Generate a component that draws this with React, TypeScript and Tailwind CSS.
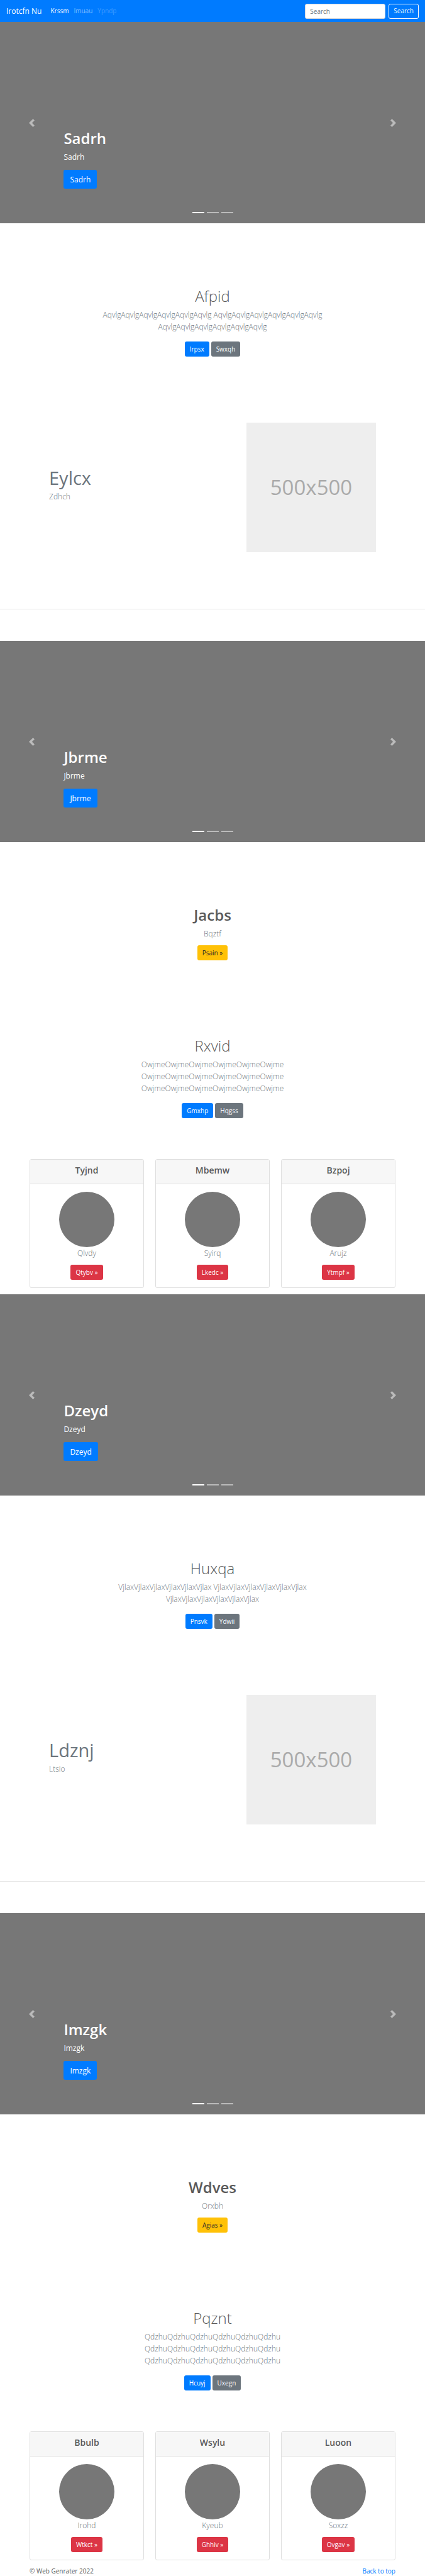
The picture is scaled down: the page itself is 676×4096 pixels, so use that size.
import React from "react";

const BUTTON = "inline-flex h-6 items-center rounded-[3px] px-2 text-[10px] leading-[15px]";

function Chevron({ path }: { path: string }) {
  return (
    <svg viewBox="0 0 8 8" className="size-[13px] fill-white" aria-hidden="true">
      <path d={path} />
    </svg>
  );
}

function NavBar() {
  return (
    <nav className="flex h-[35px] items-center bg-[#007bff] px-[10px]">
      <a href="#top" className="mr-[14px] text-[12px] leading-[19px] text-white">
        Irotcfn Nu
      </a>
      <ul className="flex gap-2 text-[10px] leading-[15px]">
        <li>
          <a href="#krssm" className="text-white">Krssm</a>
        </li>
        <li>
          <a href="#imuau" className="text-white/50">Imuau</a>
        </li>
        <li>
          <a href="#ypndp" aria-disabled="true" className="text-white/25">Ypndp</a>
        </li>
      </ul>
      <form className="ml-auto flex gap-[5px]" onSubmit={(e) => e.preventDefault()}>
        <input
          type="text"
          aria-label="Search"
          placeholder="Search"
          className="h-6 w-32 rounded-[3px] border border-[#ced4da] bg-white px-[7px] text-[10px] text-[#495057] placeholder:text-[#6c757d]"
        />
        <button type="submit" className="h-6 rounded-[3px] border border-[#f8f9fa] px-[7px] text-[10px] text-[#f8f9fa]">
          Search
        </button>
      </form>
    </nav>
  );
}

function Carousel({ title }: { title: string }) {
  return (
    <section className="relative flex h-80 bg-[#777]" aria-label={title}>
      <button type="button" aria-label="Previous" className="flex w-[15%] items-center justify-center opacity-50">
        <Chevron path="M5.25 0l-4 4 4 4 1.5-1.5-2.5-2.5 2.5-2.5-1.5-1.5z" />
      </button>
      <div className="flex flex-1 flex-col items-start justify-end pb-[55px] text-white">
        <h1 className="mb-[5px] text-[24px] font-semibold leading-[30px]">{title}</h1>
        <p className="mb-[11px] text-[12px] leading-[19px]">{title}</p>
        <a href="#more" className="inline-flex h-[30px] items-center rounded-[3px] bg-[#007bff] px-[10px] text-[12px] leading-[19px]">
          {title}
        </a>
      </div>
      <button type="button" aria-label="Next" className="flex w-[15%] items-center justify-center opacity-50">
        <Chevron path="M2.75 0l-1.5 1.5 2.5 2.5-2.5 2.5 1.5 1.5 4-4-4-4z" />
      </button>
      <div className="absolute inset-x-0 bottom-4 flex justify-center gap-1">
        <button type="button" aria-label="Slide 1" className="h-[2px] w-[19px] bg-white" />
        <button type="button" aria-label="Slide 2" className="h-[2px] w-[19px] bg-white/50" />
        <button type="button" aria-label="Slide 3" className="h-[2px] w-[19px] bg-white/50" />
      </div>
    </section>
  );
}

function Intro({ title, word, primary, secondary }: { title: string; word: string; primary: string; secondary: string }) {
  const run = word.repeat(6);
  return (
    <section className="mx-auto flex max-w-[382px] flex-col items-center text-center">
      <h1 className="mb-[5px] text-[24px] font-light leading-[30px]">{title}</h1>
      <p className="mb-[14px] text-[12px] font-light leading-[19px] text-[#6c757d]">
        {run} {run} {run}
      </p>
      <div className="flex gap-[3px] text-white">
        <a href="#primary" className={`${BUTTON} bg-[#007bff]`}>{primary}</a>
        <a href="#secondary" className={`${BUTTON} bg-[#6c757d]`}>{secondary}</a>
      </div>
    </section>
  );
}

function Feature({ title, text }: { title: string; text: string }) {
  return (
    <section className="flex items-center justify-between px-[78px]">
      <div className="pb-2 text-[#6c757d]">
        <h2 className="mb-[5px] text-[29px] leading-[31px]">{title}</h2>
        <p className="text-[12px] font-light leading-[19px]">{text}</p>
      </div>
      <div className="flex size-[206px] items-center justify-center bg-[#eee] text-[33px] text-[#aaa]">500x500</div>
    </section>
  );
}

function Callout({ title, text, action }: { title: string; text: string; action: string }) {
  return (
    <section className="flex flex-col items-center">
      <h1 className="mb-[5px] text-[24px] font-semibold leading-[30px]">{title}</h1>
      <p className="mb-[9px] text-[12px] font-light leading-[19px] text-[#6c757d]">{text}</p>
      <a href="#callout" className={`${BUTTON} bg-[#ffc107] text-[#212529]`}>{action} »</a>
    </section>
  );
}

type CardData = { title: string; text: string; action: string };

function Card({ title, text, action }: CardData) {
  return (
    <article className="flex-1 rounded-[3px] border border-[#dfdfdf] bg-white text-center">
      <h4 className="border-b border-[#dfdfdf] bg-[#f7f7f7] pb-3 pt-2 text-[14px] font-semibold leading-[18px]">{title}</h4>
      <div className="flex flex-col items-center py-3">
        <div className="size-[88px] rounded-full bg-[#777]" />
        <p className="mb-[9px] text-[12px] font-light leading-[19px] text-[#6c757d]">{text}</p>
        <a href="#card" className={`${BUTTON} bg-[#dc3545] text-white`}>{action} »</a>
      </div>
    </article>
  );
}

type BlockData = {
  slides: [string, string];
  intro: React.ComponentProps<typeof Intro>;
  feature: React.ComponentProps<typeof Feature>;
  callout: React.ComponentProps<typeof Callout>;
  second: React.ComponentProps<typeof Intro>;
  cards: CardData[];
};

const BLOCKS: BlockData[] = [
  {
    slides: ["Sadrh", "Jbrme"],
    intro: { title: "Afpid", word: "Aqvlg", primary: "Irpsx", secondary: "Swxqh" },
    feature: { title: "Eylcx", text: "Zdhch" },
    callout: { title: "Jacbs", text: "Bqztf", action: "Psain" },
    second: { title: "Rxvid", word: "Owjme", primary: "Gmxhp", secondary: "Hqgss" },
    cards: [
      { title: "Tyjnd", text: "Qlvdy", action: "Qtybv" },
      { title: "Mbemw", text: "Syirq", action: "Lkedc" },
      { title: "Bzpoj", text: "Arujz", action: "Ytmpf" },
    ],
  },
  {
    slides: ["Dzeyd", "Imzgk"],
    intro: { title: "Huxqa", word: "Vjlax", primary: "Pnsvk", secondary: "Ydwii" },
    feature: { title: "Ldznj", text: "Ltsio" },
    callout: { title: "Wdves", text: "Orxbh", action: "Agias" },
    second: { title: "Pqznt", word: "Qdzhu", primary: "Hcuyj", secondary: "Uxegn" },
    cards: [
      { title: "Bbulb", text: "Irohd", action: "Wtkct" },
      { title: "Wsylu", text: "Kyeub", action: "Ghhiv" },
      { title: "Luoon", text: "Soxzz", action: "Ovgav" },
    ],
  },
];

function Block({ data }: { data: BlockData }) {
  return (
    <>
      <Carousel title={data.slides[0]} />
      <div className="pb-[105px] pt-[101px]">
        <Intro {...data.intro} />
      </div>
      <Feature {...data.feature} />
      <hr className="mb-[50px] mt-[90px] border-t border-[#e6e6e6]" />
      <Carousel title={data.slides[1]} />
      <div className="flex flex-col gap-[121px] pb-[65px] pt-[101px]">
        <Callout {...data.callout} />
        <Intro {...data.second} />
      </div>
      <div className="flex gap-[18px] px-[47px] pb-[10px]">
        {data.cards.map((card) => (
          <Card key={card.title} {...card} />
        ))}
      </div>
    </>
  );
}

export default function App() {
  return (
    <div id="top" className="bg-white font-['Open_Sans','Noto_Sans',sans-serif] text-[#5a5a5a]">
      <NavBar />
      <main>
        {BLOCKS.map((data) => (
          <Block key={data.slides[0]} data={data} />
        ))}
      </main>
      <footer className="flex justify-between px-[47px] text-[10px] leading-[15px]">
        <p>© Web Genrater 2022</p>
        <a href="#top" className="text-[#007bff]">Back to top</a>
      </footer>
    </div>
  );
}
